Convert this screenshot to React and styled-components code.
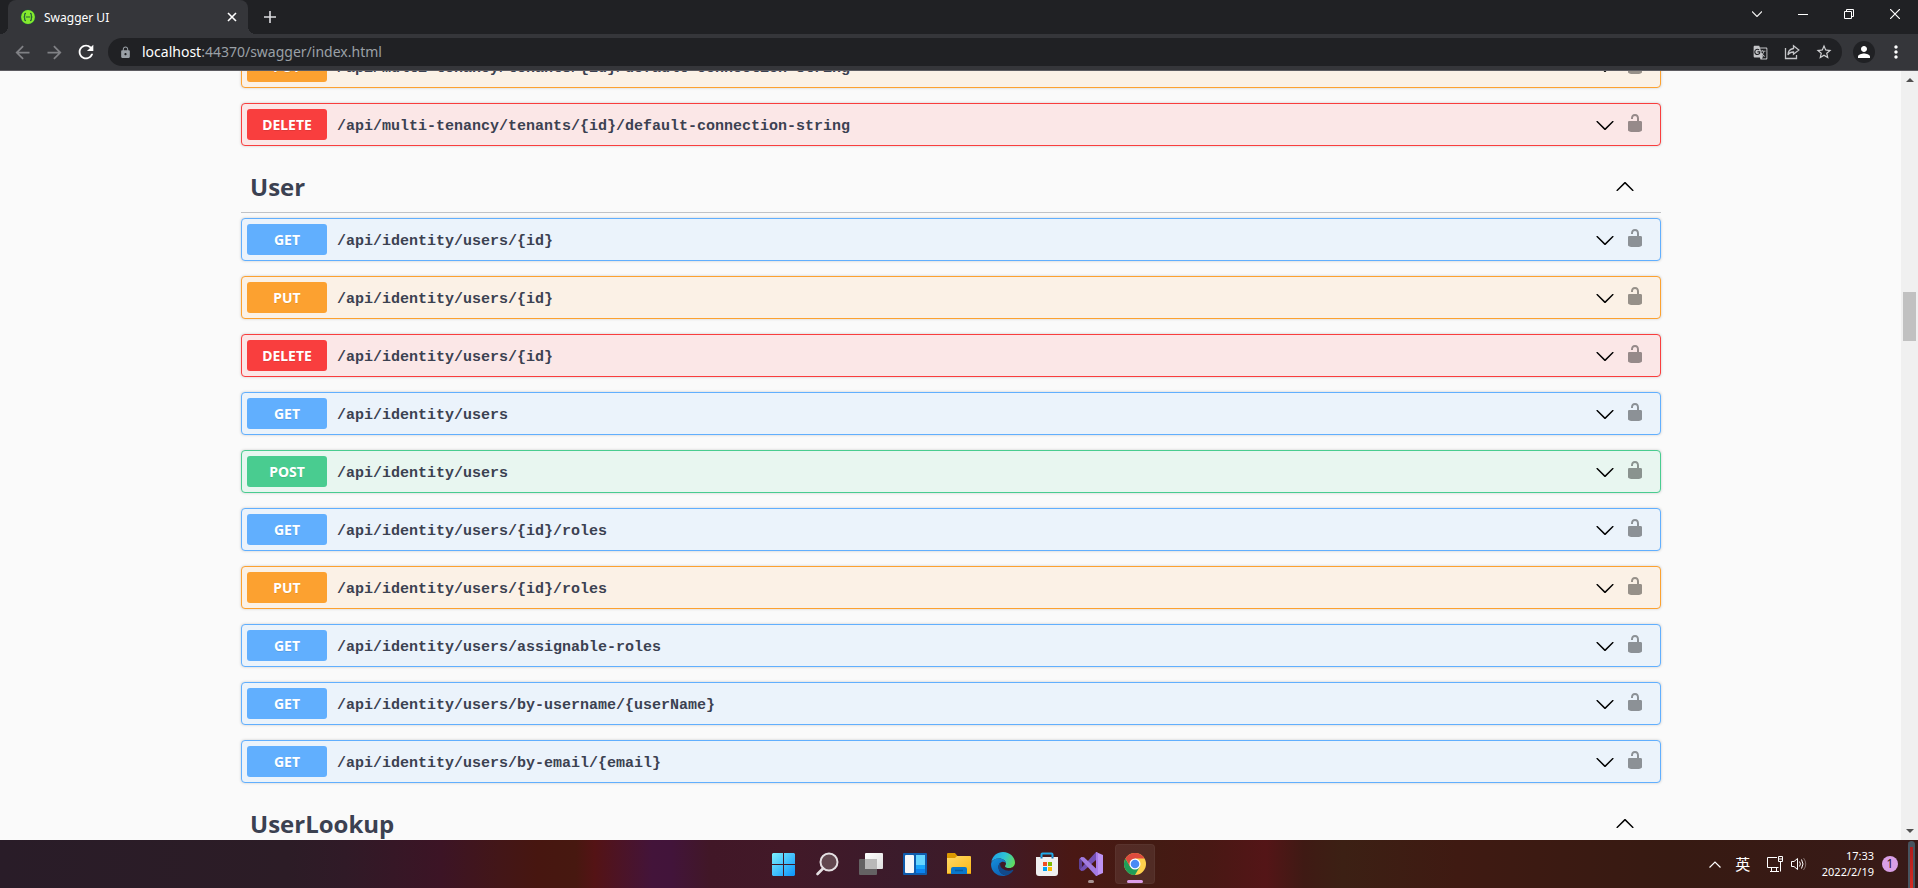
import React from "react";
import styled, { createGlobalStyle, css } from "styled-components";
import {
  MdArrowBack,
  MdArrowForward,
  MdGTranslate,
  MdLock,
  MdMoreVert,
  MdPerson,
  MdRefresh,
  MdStarBorder,
} from "react-icons/md";

const GlobalStyle = createGlobalStyle`
  * {
    box-sizing: border-box;
  }
  body {
    margin: 0;
    font-family: "Noto Sans", "Open Sans", sans-serif;
  }
  button {
    border: 0;
    padding: 0;
    background: none;
    color: inherit;
    font: inherit;
    cursor: pointer;
  }
`;

const METHOD_COLORS = {
  GET: ["#61affe", "#ebf3fb"],
  POST: ["#49cc90", "#e8f6f0"],
  PUT: ["#fca130", "#fbf1e6"],
  DELETE: ["#f93e3e", "#fbe7e7"],
};

const tenantOperations = [
  ["PUT", "/api/multi-tenancy/tenants/{id}/default-connection-string"],
  ["DELETE", "/api/multi-tenancy/tenants/{id}/default-connection-string"],
];

const userOperations = [
  ["GET", "/api/identity/users/{id}"],
  ["PUT", "/api/identity/users/{id}"],
  ["DELETE", "/api/identity/users/{id}"],
  ["GET", "/api/identity/users"],
  ["POST", "/api/identity/users"],
  ["GET", "/api/identity/users/{id}/roles"],
  ["PUT", "/api/identity/users/{id}/roles"],
  ["GET", "/api/identity/users/assignable-roles"],
  ["GET", "/api/identity/users/by-username/{userName}"],
  ["GET", "/api/identity/users/by-email/{email}"],
];

const StyledScreen = styled.div`
  display: flex;
  flex-direction: column;
  height: 100vh;
  overflow: hidden;
`;

/* browser chrome */
const StyledTabStrip = styled.header`
  display: flex;
  align-items: stretch;
  flex: none;
  height: 34px;
  padding-left: 8px;
  background: #202124;
  color: #fff;
`;
const StyledTab = styled.div`
  position: relative;
  display: flex;
  align-items: center;
  gap: 8px;
  width: 240px;
  padding: 0 8px 0 12px;
  border-radius: 8px 8px 0 0;
  background: #35363a;
  font-size: 12px;
  &::before,
  &::after {
    content: "";
    position: absolute;
    bottom: 0;
    width: 8px;
    height: 8px;
  }
  &::before {
    right: 100%;
    background: radial-gradient(circle at 0 0, transparent 8px, #35363a 8px);
  }
  &::after {
    left: 100%;
    background: radial-gradient(circle at 100% 0, transparent 8px, #35363a 8px);
  }
`;
const StyledTabTitle = styled.span`
  flex: 1;
`;
const StyledIconButton = styled.button`
  display: flex;
  flex: none;
  align-items: center;
  justify-content: center;
  width: ${({ $width }) => $width || 32}px;
  color: ${({ $color }) => $color || "#fff"};
`;
const StyledNewTab = styled(StyledIconButton)`
  margin: 0 6px;
`;
const StyledWindowControls = styled.div`
  display: flex;
  height: 28px;
  margin-left: auto;
`;
const StyledToolbar = styled.div`
  display: flex;
  flex: none;
  align-items: center;
  height: 37px;
  padding: 0 6px;
  border-bottom: 1px solid #5c5b60;
  background: #35363a;
`;
const StyledAddressBar = styled.div`
  display: flex;
  flex: 1;
  align-items: center;
  height: 28px;
  margin: 0 6px;
  padding: 0 2px 0 11px;
  border-radius: 14px;
  background: #202124;
`;
const StyledUrl = styled.p`
  flex: 1;
  margin: 0 0 0 10px;
  color: #9aa0a6;
  font-size: 14px;
  line-height: 20px;
  strong {
    color: #fff;
    font-weight: 400;
  }
`;
const StyledAvatar = styled.span`
  display: flex;
  align-items: center;
  justify-content: center;
  width: 22px;
  height: 22px;
  border-radius: 50%;
  background: #202124;
`;

/* swagger page */
const StyledPage = styled.div`
  display: flex;
  flex: 1;
  min-height: 0;
  background: #fafafa;
`;
const StyledViewport = styled.main`
  flex: 1;
  overflow: hidden;
`;
const StyledWrapper = styled.div`
  max-width: 1461px;
  margin: -26px auto 0;
  padding: 0 20px 0 21px;
`;
const StyledTag = styled.h3`
  display: flex;
  align-items: center;
  justify-content: space-between;
  height: 52px;
  margin: 0 0 5px;
  padding: 0 26px 0 9px;
  border-bottom: 1px solid rgba(59, 65, 81, 0.3);
  color: #3b4151;
  font-family: "Open Sans", sans-serif;
  font-size: 24px;
  font-weight: 700;
`;
const StyledOperation = styled.div`
  display: flex;
  align-items: center;
  margin-bottom: 15px;
  padding: 5px;
  border: 1px solid ${({ $method }) => METHOD_COLORS[$method][0]};
  border-radius: 4px;
  background: ${({ $method }) => METHOD_COLORS[$method][1]};
  box-shadow: 0 0 3px rgba(0, 0, 0, 0.19);
`;
const StyledSummary = styled.button`
  display: flex;
  flex: 1;
  align-items: center;
  text-align: left;
`;
const StyledMethod = styled.span`
  min-width: 80px;
  padding: 6px 14px;
  border-radius: 3px;
  background: ${({ $method }) => METHOD_COLORS[$method][0]};
  color: #fff;
  font-size: 14px;
  font-weight: 700;
  line-height: 19px;
  text-align: center;
  text-shadow: 0 1px 0 rgba(0, 0, 0, 0.1);
`;
const StyledPath = styled.span`
  flex: 1;
  padding: 4px 10px 0;
  color: #3b4151;
  font-family: "Liberation Mono", monospace;
  font-size: 15px;
  font-weight: 700;
`;
const StyledLockButton = styled.button`
  display: flex;
  padding: 0 10px 3px;
  opacity: 0.4;
`;
const StyledScrollbar = styled.div`
  display: flex;
  flex: none;
  flex-direction: column;
  align-items: center;
  justify-content: space-between;
  width: 17px;
  background: #f0f0f0;
`;
const StyledTrack = styled.div`
  flex: 1;
  width: 13px;
  padding-top: 204px;
  &::before {
    content: "";
    display: block;
    height: 49px;
    background: #c1c1c1;
  }
`;
const StyledArrow = styled.svg`
  flex: none;
  width: 17px;
  height: 17px;
  fill: #505050;
`;

/* windows taskbar */
const StyledTaskbar = styled.footer`
  display: grid;
  flex: none;
  grid-template-columns: 1fr auto 1fr;
  align-items: center;
  height: 48px;
  color: #fff;
  background: linear-gradient(
    90deg,
    #291c28 0%,
    #2c1c26 15%,
    #301a27 18%,
    #3c1425 23%,
    #431618 26%,
    #471610 28%,
    #471810 30%,
    #541315 31%,
    #43143a 34%,
    #42143a 35%,
    #411727 37%,
    #421928 41%,
    #3b1b2b 47%,
    #401a26 52%,
    #4a1814 56%,
    #431b13 60%,
    #481814 63%,
    #541517 66%,
    #3f1a14 68%,
    #3c2014 70%,
    #3f1a12 76%,
    #371a12 87%,
    #381a18 100%
  );
`;
const StyledApps = styled.nav`
  display: flex;
  grid-column: 2;
  gap: 4px;
`;
const StyledApp = styled.button`
  position: relative;
  display: flex;
  align-items: center;
  justify-content: center;
  width: 40px;
  height: 40px;
  border-radius: 4px;
  ${({ $active }) =>
    $active &&
    css`
      background: rgba(255, 255, 255, 0.08);
      box-shadow: inset 0 0 0 1px rgba(255, 255, 255, 0.04);
    `}
  &::after {
    content: "";
    position: absolute;
    bottom: 1px;
    width: ${({ $active, $open }) => ($active ? 16 : $open ? 6 : 0)}px;
    height: 3px;
    border-radius: 2px;
    background: ${({ $active }) => ($active ? "#dc9fe9" : "#a79392")};
  }
`;
const StyledTray = styled.div`
  display: flex;
  align-items: center;
  justify-self: end;
  align-self: stretch;
  padding-right: 3px;
`;
const StyledLanguage = styled.span`
  width: 32px;
  font-family: "Noto Sans CJK SC", sans-serif;
  font-size: 15px;
  line-height: 20px;
  text-align: center;
`;
const StyledDevices = styled.div`
  display: flex;
  gap: 8px;
  margin: 0 15px 0 8px;
`;
const StyledClock = styled.time`
  font-size: 11px;
  line-height: 16px;
  text-align: right;
`;
const StyledCount = styled.span`
  width: 16px;
  margin: 0 10px 0 8px;
  border-radius: 50%;
  background: #d99fe6;
  color: #2b1520;
  font-size: 12px;
  line-height: 16px;
  text-align: center;
`;
const StyledMeter = styled.span`
  align-self: stretch;
  width: 7px;
  margin-top: 1px;
  border: solid #47545f;
  border-width: 6px 2px 0;
  border-radius: 4px 4px 0 0;
  background: linear-gradient(#b01c1c, #d62c22);
`;

function Chevron({ up }) {
  return (
    <svg width="20" height="20" viewBox="0 0 20 20">
      <path
        transform={up ? "rotate(180 10 10)" : undefined}
        d="M17.418 6.109c.272-.268.709-.268.979 0s.271.701 0 .969l-7.908 7.83c-.27.268-.707.268-.979 0l-7.908-7.83c-.27-.268-.27-.701 0-.969.271-.268.709-.268.979 0L10 13.25l7.418-7.141z"
      />
    </svg>
  );
}

function Unlocked() {
  return (
    <svg width="20" height="20" viewBox="0 0 20 20">
      <path d="M15.8 8H14V5.6C14 2.703 12.665 1 10 1 7.334 1 6 2.703 6 5.6V6h2v-.801C8 3.754 8.797 3 10 3c1.203 0 2 .754 2 2.199V8H4c-.553 0-1 .646-1 1.199V17c0 .549.428 1.139.951 1.307l1.197.387C5.672 18.861 6.55 19 7.1 19h5.8c.549 0 1.428-.139 1.951-.307l1.196-.387c.524-.167.953-.757.953-1.306V9.199C17 8.646 16.352 8 15.8 8z" />
    </svg>
  );
}

function Operation({ method, path }) {
  return (
    <StyledOperation $method={method}>
      <StyledSummary>
        <StyledMethod $method={method}>{method}</StyledMethod>
        <StyledPath>{path}</StyledPath>
        <Chevron />
      </StyledSummary>
      <StyledLockButton aria-label="Authorize">
        <Unlocked />
      </StyledLockButton>
    </StyledOperation>
  );
}

function Tag({ name }) {
  return (
    <StyledTag>
      {name}
      <StyledIconButton $width={20} $color="#000" aria-label="Collapse">
        <Chevron up />
      </StyledIconButton>
    </StyledTag>
  );
}

function BrowserChrome() {
  return (
    <>
      <StyledTabStrip>
        <StyledTab>
          <svg width="16" height="16" viewBox="0 0 16 16">
            <circle cx="8" cy="8" r="7.5" fill="#1d5c3f" />
            <circle cx="8" cy="8" r="6.9" fill="#85ea2d" />
            <path
              d="M6 4.4c-1.4 0-1.3.7-1.3 1.8S4.3 8 3.6 8c.7 0 1.1.7 1.1 1.8s-.1 1.8 1.3 1.8M10 4.4c1.4 0 1.3.7 1.3 1.8s.4 1.8 1.1 1.8c-.7 0-1.1.7-1.1 1.8s.1 1.8-1.3 1.8M5.8 8h4.6"
              fill="none"
              stroke="#24613a"
              strokeWidth="1.2"
            />
          </svg>
          <StyledTabTitle>Swagger UI</StyledTabTitle>
          <StyledIconButton $width={16} aria-label="Close tab">
            <svg width="10" height="10" stroke="#fff" strokeWidth="1.6">
              <path d="M1 1l8 8M9 1l-8 8" />
            </svg>
          </StyledIconButton>
        </StyledTab>
        <StyledNewTab aria-label="New tab">
          <svg width="12" height="12" stroke="#dcdde0" strokeWidth="1.6">
            <path d="M6 0v12M0 6h12" />
          </svg>
        </StyledNewTab>
        <StyledWindowControls>
          <StyledIconButton $width={46} aria-label="Search tabs">
            <svg
              width="10"
              height="6"
              fill="none"
              stroke="#f0f0f0"
              strokeWidth="1.2"
            >
              <path d="M0 .5l5 5 5-5" />
            </svg>
          </StyledIconButton>
          <StyledIconButton $width={46} aria-label="Minimize">
            <svg width="10" height="1">
              <path d="M0 0h10v1H0z" fill="#fff" />
            </svg>
          </StyledIconButton>
          <StyledIconButton $width={46} aria-label="Restore">
            <svg width="10" height="10" fill="none" stroke="#fff">
              <path d="M.5 2.5h7v7h-7zM2.5 2.5v-2h7v7h-2" />
            </svg>
          </StyledIconButton>
          <StyledIconButton $width={46} aria-label="Close">
            <svg width="10" height="10" stroke="#fff" strokeWidth="1.2">
              <path d="M0 0l10 10M10 0L0 10" />
            </svg>
          </StyledIconButton>
        </StyledWindowControls>
      </StyledTabStrip>
      <StyledToolbar>
        <StyledIconButton $color="#808185" aria-label="Back">
          <MdArrowBack size={21} />
        </StyledIconButton>
        <StyledIconButton $color="#808185" aria-label="Forward">
          <MdArrowForward size={21} />
        </StyledIconButton>
        <StyledIconButton aria-label="Reload">
          <MdRefresh size={22} />
        </StyledIconButton>
        <StyledAddressBar>
          <MdLock size={13} color="#9aa0a6" />
          <StyledUrl>
            <strong>localhost</strong>:44370/swagger/index.html
          </StyledUrl>
          <StyledIconButton $color="#c4c5c8" aria-label="Translate">
            <MdGTranslate size={15} />
          </StyledIconButton>
          <StyledIconButton aria-label="Share">
            <svg
              width="16"
              height="16"
              fill="none"
              stroke="#c4c5c8"
              strokeWidth="1.3"
            >
              <path d="M1.5 4v10.500h11V11M9.500 1.800L14.800 6 9.500 10.200V8C7 8 5 9 4 11c0-3.500 2.200-6 5.500-6.500z" />
            </svg>
          </StyledIconButton>
          <StyledIconButton $color="#d0d1d3" aria-label="Bookmark">
            <MdStarBorder size={18} />
          </StyledIconButton>
        </StyledAddressBar>
        <StyledIconButton aria-label="Profile">
          <StyledAvatar>
            <MdPerson size={18} />
          </StyledAvatar>
        </StyledIconButton>
        <StyledIconButton aria-label="Menu">
          <MdMoreVert size={20} />
        </StyledIconButton>
      </StyledToolbar>
    </>
  );
}

function StartIcon() {
  return (
    <svg width="23" height="23" viewBox="0 0 23 23">
      <linearGradient id="start" x1="0" y1="0" x2="1" y2="1">
        <stop offset="0" stopColor="#7df0ff" />
        <stop offset="1" stopColor="#0a93fb" />
      </linearGradient>
      <path
        fill="url(#start)"
        d="M1 0h10v11H0V1zM12 0h10l1 1v10H12zM0 12h11v11H1l-1-1zM12 12h11v10l-1 1H12z"
      />
    </svg>
  );
}

function SearchIcon() {
  return (
    <svg width="24" height="24" fill="none" stroke="#e4dfe2">
      <circle cx="14" cy="10" r="8.5" strokeWidth="2" fill="#62474f" />
      <path d="M8 16.5L2.5 22" strokeWidth="2.6" strokeLinecap="round" />
    </svg>
  );
}

function TaskViewIcon() {
  return (
    <svg width="24" height="24">
      <linearGradient id="view" x1="0" y1="0" x2="1" y2="1">
        <stop offset="0" stopColor="#fff" />
        <stop offset="1" stopColor="#dedede" />
      </linearGradient>
      <rect y="7" width="18" height="16" rx="1" fill="#646263" />
      <rect x="6" y="1" width="18" height="16" rx="1" fill="url(#view)" />
      <path d="M6 7h12v10H6z" fill="#b9b8b8" />
    </svg>
  );
}

function WidgetsIcon() {
  return (
    <svg width="24" height="24">
      <rect y="1" width="24" height="22" rx="1" fill="#0f5cad" />
      <rect x="2" y="3" width="9" height="18" rx="1" fill="#f7f8fa" />
      <path d="M13 3h9v10h-9z" fill="#66d5ff" />
      <path d="M13 13h9v4h-9z" fill="#18a6fb" />
      <path d="M13 17h9v4h-9z" fill="#0b83f0" />
    </svg>
  );
}

function ExplorerIcon() {
  return (
    <svg width="24" height="24">
      <linearGradient id="folder" x1="0" y1="0" x2="1" y2="1">
        <stop offset="0" stopColor="#ffd968" />
        <stop offset="1" stopColor="#fdb813" />
      </linearGradient>
      <path d="M0 2q0-1 1-1h7l2.5 3-2 3H0z" fill="#dc9900" />
      <path d="M0 6h8l2-2h13q1 0 1 1v17H0z" fill="url(#folder)" />
      <path d="M4 22v-5q0-2 2-2h12q2 0 2 2v5z" fill="#0a78cc" />
      <path d="M8 18.5h8" stroke="#075b9f" strokeWidth="1.5" />
      <path d="M0 21.5h4M20 21.5h4" stroke="#dc9a0a" />
    </svg>
  );
}

function EdgeIcon() {
  return (
    <svg width="24" height="24" viewBox="0 0 24 24">
      <linearGradient id="edgeTop" x1="0" y1=".3" x2="1" y2=".6">
        <stop offset="0" stopColor="#1fa2e8" />
        <stop offset=".5" stopColor="#2ec3d6" />
        <stop offset="1" stopColor="#62dc5c" />
      </linearGradient>
      <linearGradient id="edgeLeft" x1="0" y1="0" x2=".6" y2="1">
        <stop offset="0" stopColor="#1690dc" />
        <stop offset="1" stopColor="#0c62b4" />
      </linearGradient>
      <path
        fill="url(#edgeTop)"
        d="M.3 10C1.5 3.5 6.5 0 12 0c7 0 12 5.3 12 10.5 0 3.400-2.600 5.500-5.600 5.500-2.600 0-4.400-.8-4.400-1.800 0-.6 1-1 1-2.700C15 9 12 6.500 8.300 6.500 4 6.500 1.300 8.500.3 10z"
      />
      <path
        fill="url(#edgeLeft)"
        d="M.1 12C.4 8.5 4 6.5 8 6.5c3.800 0 7 2.300 7 5-.5-1-1.500-1.700-3-1.700-2.500 0-4.500 2.400-4.500 5.400 0 4.200 3.500 7.800 8 8.200-1 .4-2.200.6-3.500.6C5 24-.3 18.500.1 12z"
      />
      <path
        fill="#114a8b"
        d="M9.3 10.6c-1.200.9-1.800 2.600-1.800 4.600 0 4.200 3.500 8 8 8.200 2.800-.9 5.200-2.700 6.700-5 .3-.5-.1-.8-.5-.6-1.200.6-2.500.9-4 .9-4.700 0-8.500-2.700-8.500-6.100 0-.7 0-1.400.1-2z"
      />
    </svg>
  );
}

function StoreIcon() {
  return (
    <svg width="24" height="24">
      <path
        d="M6.5 6V2.500q0-1 1-1h9q1 0 1 1V6"
        fill="none"
        stroke="#1fa9e8"
        strokeWidth="2"
      />
      <path d="M1 5h22v16q0 3-3 3H4q-3 0-3-3z" fill="#f0f0f0" />
      <path d="M8 10h4v4H8z" fill="#f04e23" />
      <path d="M13 10h4v4h-4z" fill="#7fba00" />
      <path d="M8 15h4v4H8z" fill="#00a1f1" />
      <path d="M13 15h4v4h-4z" fill="#fdb900" />
      <path d="M6.5 5v1.500M17.500 5v1.500" stroke="#1673b8" strokeWidth="2" />
    </svg>
  );
}

function VisualStudioIcon() {
  return (
    <svg width="24" height="24" viewBox="0 0 24 24">
      <path d="M0 7l2.500-2 3.500 3v8l-3.500 3L0 17z" fill="#5f4097" />
      <path d="M3 9l3 3-3 3z" fill="#40182a" />
      <path d="M17 0v8L5 18.500 2.500 19 1 17.500z" fill="#7450b5" />
      <path d="M17 0l7 3v18l-7 3z" fill="#bd93f3" />
      <path d="M17 0l2 .9v22.200l-2 .9z" fill="#a97be8" />
      <path d="M17 24v-7.500L5 5.200 2.500 5 1 6.500z" fill="#a27be0" />
    </svg>
  );
}

function ChromeIcon() {
  return (
    <svg width="24" height="24" viewBox="0 0 24 24">
      <circle cx="12" cy="12" r="11" fill="#fdd04c" />
      <path
        fill="#1f9d58"
        d="M2.470 6.500A11 11 0 0 0 12 23l4.760-8.250L12 12l-4.760 2.750z"
      />
      <path
        fill="#dd4b3e"
        d="M2.470 6.500a11 11 0 0 1 19.060 0H12V12l-4.760 2.750z"
      />
      <circle cx="12" cy="12" r="5.500" fill="#fff" />
      <circle cx="12" cy="12" r="4.300" fill="#4a8af4" />
    </svg>
  );
}

const apps = [
  { name: "Start", Icon: StartIcon },
  { name: "Search", Icon: SearchIcon },
  { name: "Task view", Icon: TaskViewIcon },
  { name: "Widgets", Icon: WidgetsIcon },
  { name: "File Explorer", Icon: ExplorerIcon },
  { name: "Edge", Icon: EdgeIcon },
  { name: "Store", Icon: StoreIcon },
  { name: "Visual Studio", Icon: VisualStudioIcon, open: true },
  { name: "Chrome", Icon: ChromeIcon, active: true },
];

function Taskbar() {
  return (
    <StyledTaskbar>
      <StyledApps>
        {apps.map(({ name, Icon, open, active }) => (
          <StyledApp
            key={name}
            aria-label={name}
            $open={open}
            $active={active}
          >
            <Icon />
          </StyledApp>
        ))}
      </StyledApps>
      <StyledTray>
        <StyledIconButton $width={24} aria-label="Hidden icons">
          <svg
            width="12"
            height="7"
            fill="none"
            stroke="#fff"
            strokeWidth="1.2"
          >
            <path d="M.5 6.5L6 1l5.500 5.500" />
          </svg>
        </StyledIconButton>
        <StyledLanguage>英</StyledLanguage>
        <StyledDevices>
          <svg width="16" height="16" fill="none" stroke="#fff">
            <path d="M10 1.500H.5v10h11M4.500 12v3M9.500 12v3M3 15.500h9M11.500.5h4v5h-4zM11.500 3h4M13.500 6v9.500" />
          </svg>
          <svg width="16" height="16" fill="none" stroke="#fff">
            <path d="M.5 5.500v5H3l3.500 3v-11L3 5.500zM8.500 5.500q1.800 2.500 0 5M10.500 3.500q3 4.500 0 9" />
            <path d="M12.500 2q4.500 6 0 12" stroke="#846f6c" />
          </svg>
        </StyledDevices>
        <StyledClock>
          17:33
          <br />
          2022/2/19
        </StyledClock>
        <StyledCount>1</StyledCount>
        <StyledMeter />
      </StyledTray>
    </StyledTaskbar>
  );
}

export default function App() {
  return (
    <StyledScreen>
      <GlobalStyle />
      <BrowserChrome />
      <StyledPage>
        <StyledViewport>
          <StyledWrapper>
            {tenantOperations.map(([method, path]) => (
              <Operation key={method + path} method={method} path={path} />
            ))}
            <Tag name="User" />
            {userOperations.map(([method, path]) => (
              <Operation key={method + path} method={method} path={path} />
            ))}
            <Tag name="UserLookup" />
          </StyledWrapper>
        </StyledViewport>
        <StyledScrollbar>
          <StyledArrow>
            <path d="M5 11l4-4 4 4z" />
          </StyledArrow>
          <StyledTrack />
          <StyledArrow>
            <path d="M5 6l4 4 4-4z" />
          </StyledArrow>
        </StyledScrollbar>
      </StyledPage>
      <Taskbar />
    </StyledScreen>
  );
}
